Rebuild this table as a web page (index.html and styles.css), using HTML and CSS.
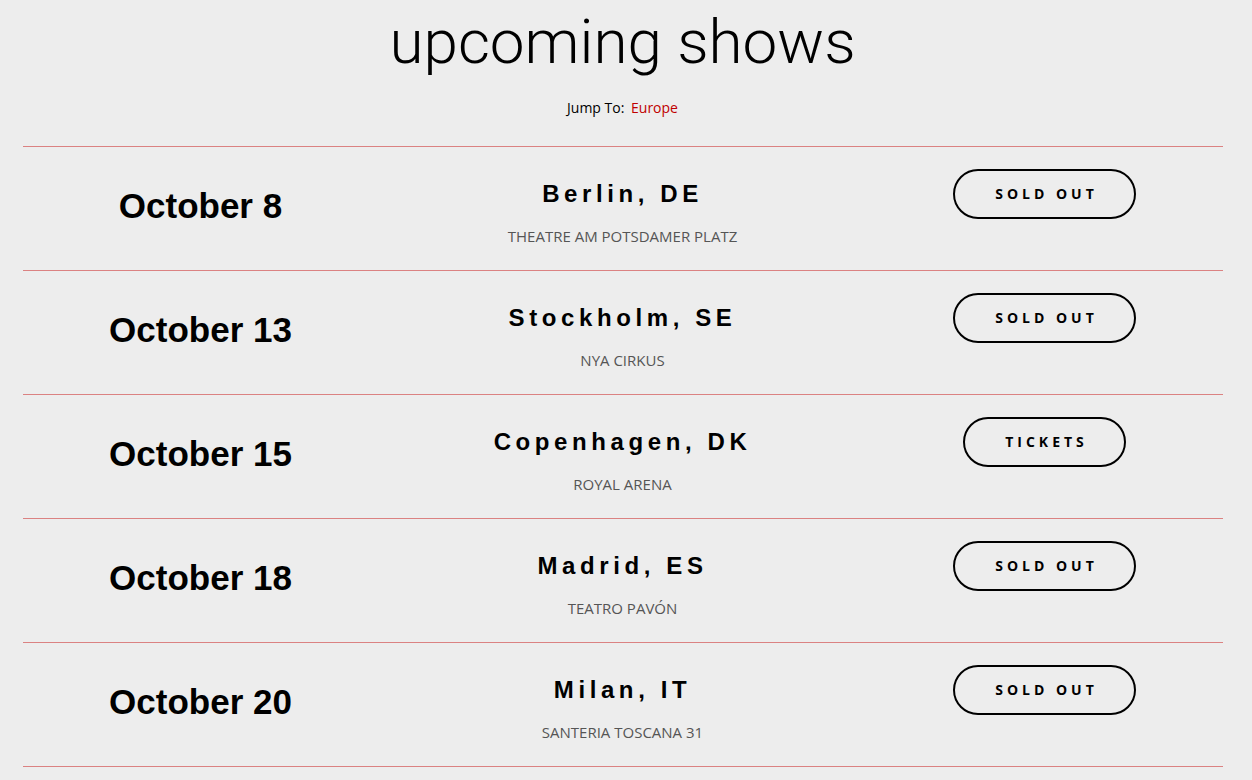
FILE: index.html
```html
<!DOCTYPE html>
<html>
<head>
<meta charset="utf-8">
<link rel="stylesheet" href="styles.css">
</head>
<body>
<div class="page">
  <h1 class="title">upcoming shows</h1>
  <p class="jump">Jump To: <a class="jump-link" href="#europe">Europe</a></p>
  <div class="shows" id="europe">
    <div class="show">
      <div class="date">October 8</div>
      <div class="place"><div class="city">Berlin, DE</div><div class="venue">Theatre am Potsdamer Platz</div></div>
      <div class="action"><a class="btn" href="#">Sold Out</a></div>
    </div>
    <div class="show">
      <div class="date">October 13</div>
      <div class="place"><div class="city">Stockholm, SE</div><div class="venue">Nya Cirkus</div></div>
      <div class="action"><a class="btn" href="#">Sold Out</a></div>
    </div>
    <div class="show">
      <div class="date">October 15</div>
      <div class="place"><div class="city">Copenhagen, DK</div><div class="venue">Royal Arena</div></div>
      <div class="action"><a class="btn" href="#">Tickets</a></div>
    </div>
    <div class="show">
      <div class="date">October 18</div>
      <div class="place"><div class="city">Madrid, ES</div><div class="venue">Teatro Pavón</div></div>
      <div class="action"><a class="btn" href="#">Sold Out</a></div>
    </div>
    <div class="show">
      <div class="date">October 20</div>
      <div class="place"><div class="city">Milan, IT</div><div class="venue">Santeria Toscana 31</div></div>
      <div class="action"><a class="btn" href="#">Sold Out</a></div>
    </div>
  </div>
</div>
</body>
</html>
```
FILE: styles.css
```css
html, body {
  margin: 0;
  padding: 0;
  background: #ededed;
}
.page {
  width: 1245px;
  display: flex;
  flex-direction: column;
  align-items: center;
}
.title {
  margin: 0;
  padding-top: 2px;
  font-family: Roboto, "Liberation Sans", sans-serif;
  font-weight: 300;
  font-size: 62px;
  line-height: 80px;
  color: #000;
}
.jump {
  margin: 14px 0 0;
  font-family: "Open Sans", sans-serif;
  font-size: 14px;
  line-height: 24px;
  color: #000;
}
.jump-link {
  color: #c00000;
  text-decoration: none;
  margin-left: 3px;
}
.shows {
  width: 1200px;
  margin-top: 26px;
  border-top: 1px solid #db8282;
}
.show {
  display: grid;
  grid-template-columns: 356px 488px 356px;
  height: 123px;
  border-bottom: 1px solid #db8282;
}
.date {
  align-self: center;
  text-align: center;
  font-family: "Liberation Sans", Arial, sans-serif;
  font-weight: 700;
  font-size: 35px;
  color: #000;
  margin-top: -6px;
}
.place {
  text-align: center;
  padding-top: 33px;
}
.city {
  font-family: "Liberation Sans", Arial, sans-serif;
  font-weight: 700;
  font-size: 24px;
  line-height: 28px;
  letter-spacing: 4.6px;
  color: #000;
}
.venue {
  margin-top: 18px;
  font-family: "Open Sans", sans-serif;
  font-size: 15px;
  line-height: 20px;
  text-transform: uppercase;
  color: #555;
}
.action {
  display: flex;
  justify-content: center;
  align-items: flex-start;
  padding-top: 22px;
}
.btn {
  display: inline-block;
  box-sizing: border-box;
  height: 50px;
  line-height: 46px;
  padding: 0 36px 0 40px;
  border: 2px solid #000;
  border-radius: 25px;
  font-family: "Open Sans", sans-serif;
  font-weight: 700;
  font-size: 14px;
  letter-spacing: 4px;
  text-transform: uppercase;
  color: #000;
  text-decoration: none;
}
```
